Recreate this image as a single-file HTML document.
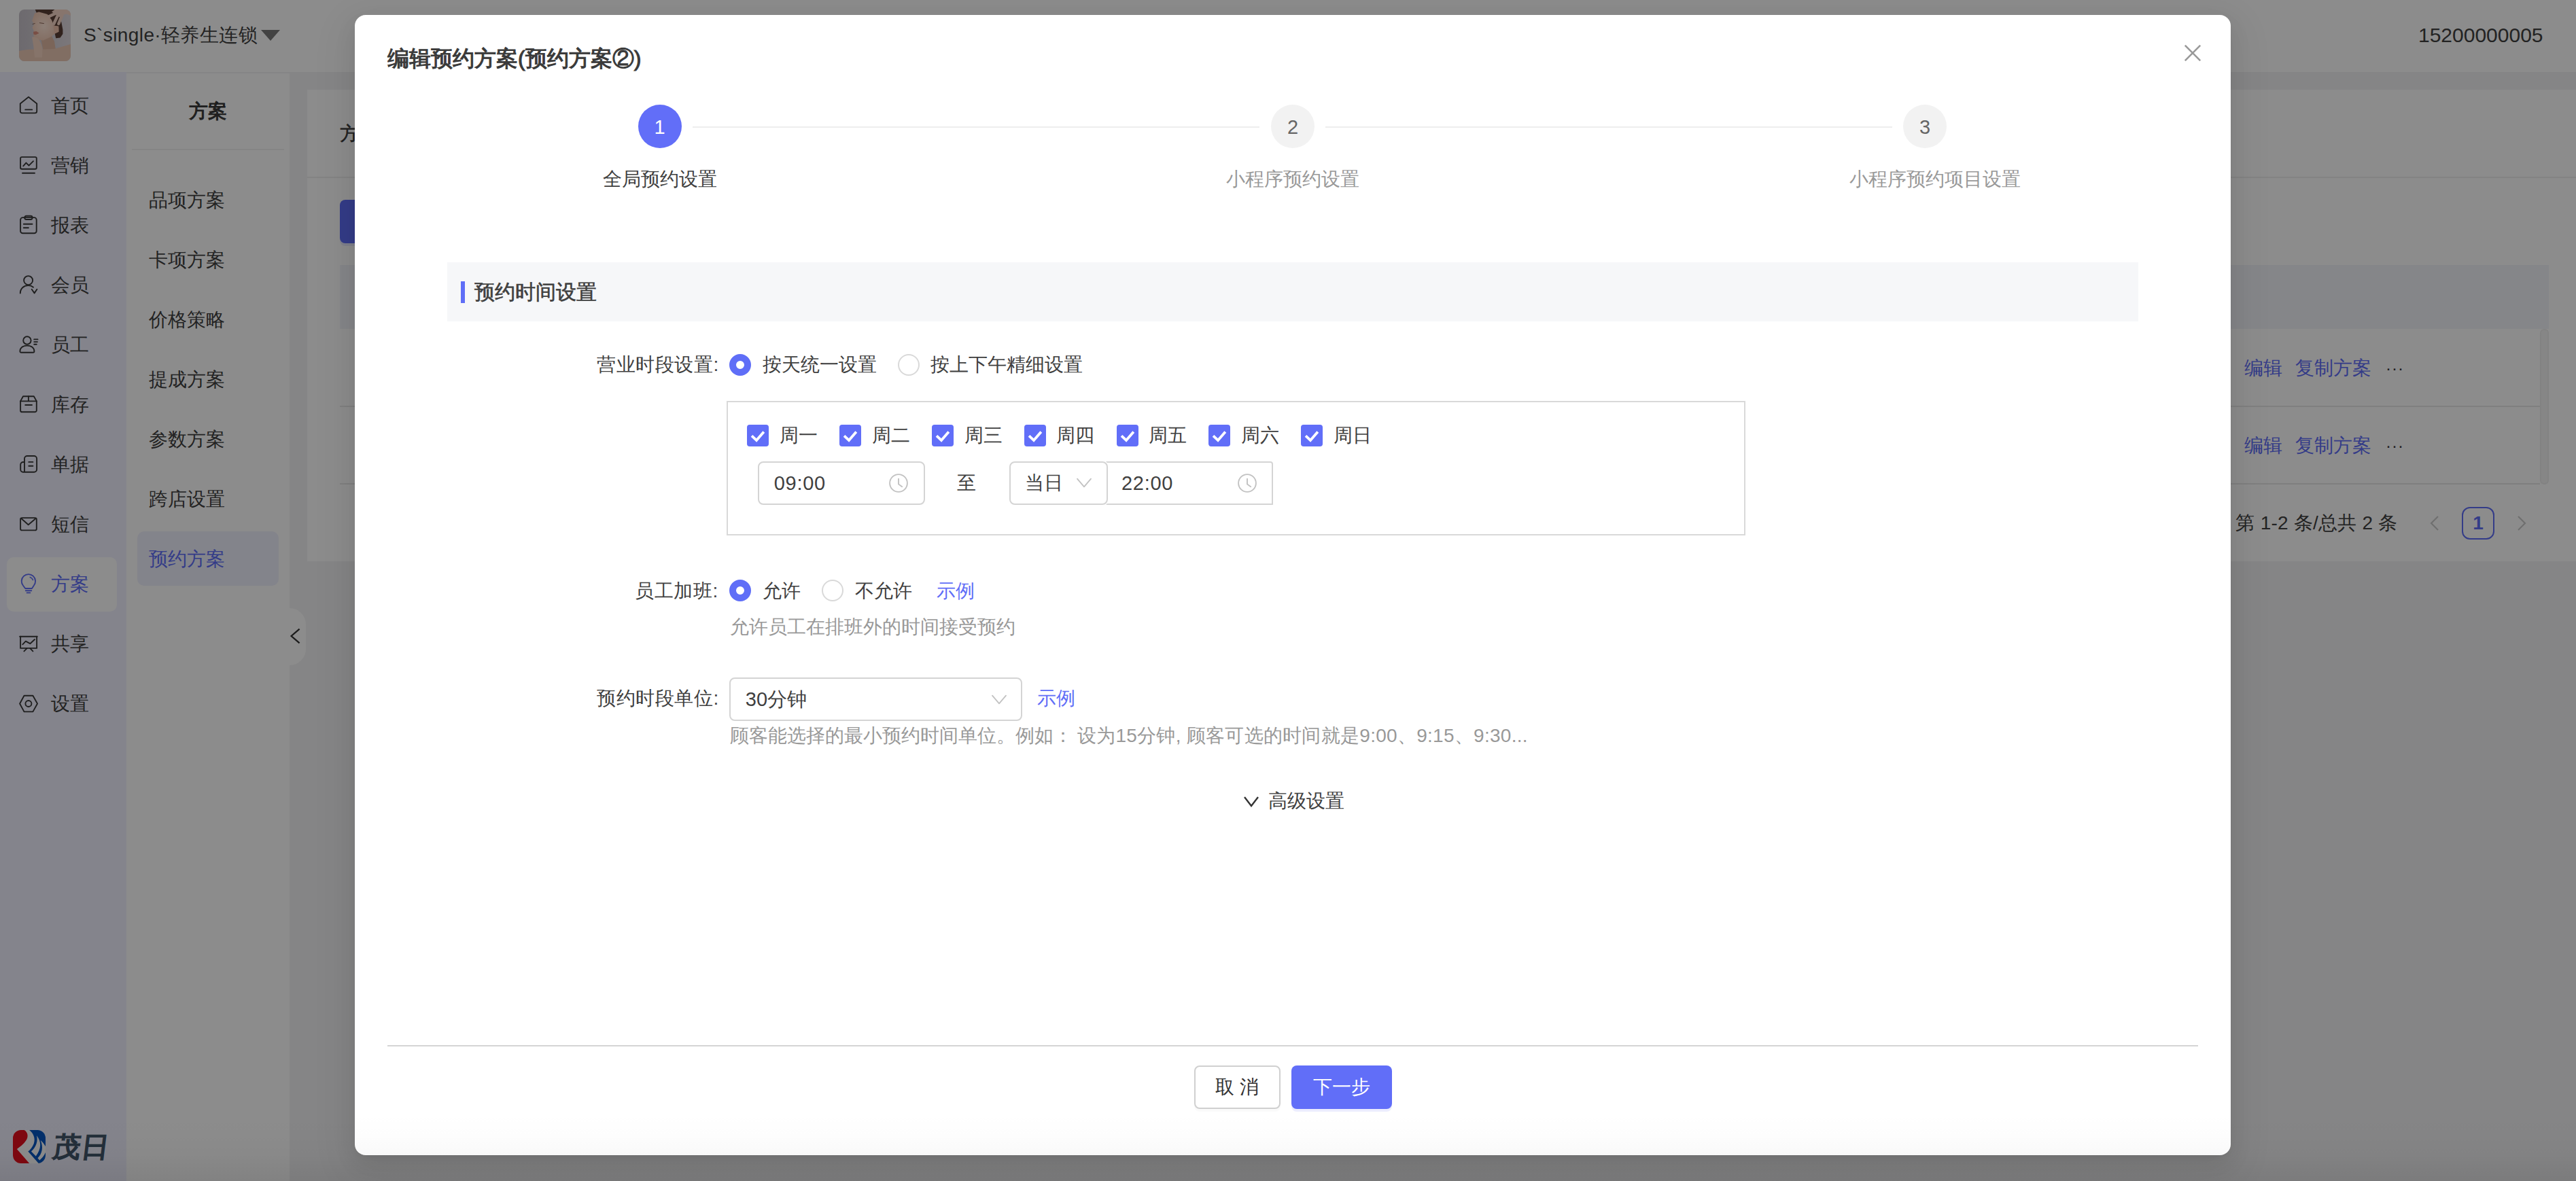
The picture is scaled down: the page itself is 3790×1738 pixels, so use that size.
<!DOCTYPE html>
<html lang="zh">
<head>
<meta charset="utf-8">
<title>预约方案</title>
<style>
*{box-sizing:border-box;margin:0;padding:0}
html,body{width:3790px;height:1738px;overflow:hidden;background:#f3f3f4}
body{font-family:"Liberation Sans",sans-serif;font-size:14px;color:#404040}
#root{position:absolute;left:0;top:0;width:1895px;height:869px;zoom:2;overflow:hidden;background:#f3f3f4}
.abs{position:absolute}
.t{position:absolute;white-space:nowrap;line-height:22px;height:22px}
/* header */
#hdr{position:absolute;left:0;top:0;width:1895px;height:53px;background:#fff}
#avatar{position:absolute;left:14px;top:7px;width:38px;height:38px;border-radius:4px;overflow:hidden}
/* sidebars */
#sb1{position:absolute;left:0;top:53px;width:93px;height:816px;background:#f1f1ff}
#sb2{position:absolute;left:93px;top:54px;width:120px;height:815px;background:#fff}
.mi{position:absolute;left:5px;width:81px;height:40px;border-radius:5px}
.mi svg{position:absolute;left:9px;top:12.5px;width:14px;height:14px;overflow:visible;fill:none;stroke:#3a3a3a;stroke-width:.95;stroke-linecap:round;stroke-linejoin:round}
.mi span{position:absolute;left:32.5px;top:9px;line-height:22px;font-size:14px;color:#404040}
.mi.on{background:#fff}
.mi.on svg{stroke:#5f6ef7}
.mi.on span{color:#5f6ef7}
.si{position:absolute;left:8px;width:104px;height:40px;border-radius:5px;line-height:40px;padding-left:8.5px;font-size:14px;color:#404040}
.si.on{background:#eef0fd;color:#5f6ef7;margin-top:-.6px;line-height:41.2px}
/* content */
#card{position:absolute;left:226px;top:66px;width:1669px;height:347px;background:#fff}
.lnk{color:#5f6ef7}
/* mask */
#mask{position:absolute;left:0;top:0;width:1895px;height:869px;background:rgba(0,0,0,.45)}
/* modal */
#modal{position:absolute;left:261px;top:11px;width:1380px;height:839px;background:#fff;border-radius:8px;box-shadow:0 3px 6px -4px rgba(0,0,0,.12),0 6px 16px 0 rgba(0,0,0,.08),0 9px 28px 8px rgba(0,0,0,.05)}
#modal .t{color:#404040}
.step{position:absolute;width:32px;height:32px;border-radius:50%;text-align:center;line-height:33px;font-size:14.5px}
.radio{position:absolute;width:16px;height:16px;border-radius:50%;border:1px solid #d9d9d9;background:#fff}
.radio.on{border:5px solid #5f6ef7}
.cb{position:absolute;width:16px;height:16px;border-radius:2px;background:#616ef8}
.cb svg{position:absolute;left:0;top:0;width:16px;height:16px;fill:none;stroke:#fff;stroke-width:1.9;stroke-linecap:butt;stroke-linejoin:miter}
.inp{position:absolute;height:32px;border:1px solid #d4d4d4;border-radius:4px;background:#fff}
.inp .v{position:absolute;left:11px;top:4px;line-height:22px;font-size:14px;color:#404040;white-space:nowrap}
.ico{position:absolute;fill:none;stroke:#c2c2c2;stroke-width:.95;stroke-linecap:round;stroke-linejoin:round}
.help{color:#999 !important}
#btm{position:absolute;left:0;top:819px;width:1895px;height:50px;background:linear-gradient(to bottom,rgba(0,0,0,0) 0,rgba(0,0,0,.006) 32%,rgba(0,0,0,.022) 62%,rgba(0,0,0,.075) 100%)}
</style>
</head>
<body>
<div id="root">
<!-- ===== background app ===== -->
<div id="hdr">
  <div id="avatar">
    <svg width="38" height="38" viewBox="0 0 38 38">
<defs><linearGradient id="abg" x1="0" x2="1" y1="0" y2="0"><stop offset="0" stop-color="#c6c1c9"/><stop offset="1" stop-color="#e0dadf"/></linearGradient>
<radialGradient id="afc" cx=".45" cy=".5" r=".6"><stop offset="0" stop-color="#ffe6d8"/><stop offset="1" stop-color="#eec5b0"/></radialGradient></defs>
<rect width="38" height="38" fill="url(#abg)"/>
<path d="M11.9 0.0L25.6 0.0L29.5 2.3L31.1 9.0L32.2 14.8L32.2 18.0L30.3 20.7L27.1 21.1L26.4 18.0L25.6 13.3L23.2 9.0L20.9 5.1L16.2 2.7L12.7 2.3Z" fill="#5a3f35"/>
<path d="M16.2 21.9L17.8 30.5L27.1 30.5L26.0 23.4L24.0 19.5Z" fill="#e0b8a3"/>
<path d="M0 30.500C5 29.500 9 29.300 12 29.500L26 29C30 28 34 26.500 38 25.500V38H0Z" fill="#ecc8b4"/>
<path d="M11.5 2.7L14.6 1.8L20.9 3.5L24.0 7.8L25.6 11.7L29.1 12.5L29.1 16.4L26.0 18.0L23.2 20.3L17.8 22.7L13.5 22.3L11.1 20.3L10.5 18.0L10.9 15.6L9.8 13.3L11.1 10.9L9.6 8.2L10.7 5.1Z" fill="url(#afc)"/>
<path d="M25.2 11.7L29.1 12.3L29.3 16.4L26.0 17.8Z" fill="#f0c4ae"/>
<path d="M26.4 0.0L38.0 0.0L38.0 4.5L35.0 3.3L32.6 3.9L31.1 6.2L27.1 3.9L24.0 1.6Z" fill="#f6d6c6"/>
<path d="M27.1 2.7L21.7 5.3M29.1 3.1L25.6 10.5M31.8 3.9L29.1 10.5" stroke="#f6d6c6" stroke-width="2.200" stroke-linecap="round" fill="none"/>
<path d="M9.6 20.3L11.5 20.1L14.3 21.5L16.2 25.0L17.2 28.5L17.0 35.2L11.5 35.2L10.7 27.3Z" fill="#f5d3c1"/>
<path d="M10.5 16.4L12.7 16.0L14.8 17.4L12.3 18.6L10.7 18.2Z" fill="#dc8f7e"/>
<path d="M15 9.800l3.400.500M9.800 10.800l2-.600" stroke="#8a6556" stroke-width=".5" fill="none"/>
</svg>
  </div>
  <div class="t" style="left:61.5px;top:15px;font-size:14px;letter-spacing:.2px">S`single·轻养生连锁</div>
  <svg class="abs" style="left:192px;top:22px" width="14" height="8" viewBox="0 0 14 8"><path d="M0 0H14L7 8Z" fill="#7a7a7a"/></svg>
  <div class="t" style="left:1779px;top:15px;font-size:15px">15200000005</div>
</div>
<div id="sb1">
<div class="mi" style="top:5px"><svg viewBox="0 0 14 14"><path d="M7 .85l6.100 4.900V11.400a1.300 1.300 0 0 1-1.300 1.300H2.200A1.300 1.300 0 0 1 .9 11.400V5.750z"/><path d="M4.600 10.200h5"/></svg><span>首页</span></div>
<div class="mi" style="top:49px"><svg viewBox="0 0 14 14"><rect x="1.050" y="1.050" width="11.850" height="8.850" rx="1"/><path d="M3.100 7.650l2.100-2.350 2.050 2.050 3.250-3.250"/><path d="M2.500 12.900h9"/></svg><span>营销</span></div>
<div class="mi" style="top:93px"><svg viewBox="0 0 14 14"><rect x="1.050" y="1.550" width="11.800" height="11.600" rx="1.700"/><rect x="4.100" y=".4" width="5.700" height="2.600" rx="1.200"/><path d="M3.400 6.350h6.350M3.400 9.150h3.550"/></svg><span>报表</span></div>
<div class="mi" style="top:137px"><svg viewBox="0 0 14 14"><circle cx="6.800" cy="3.800" r="3.250"/><path d="M.9 13.300c0-3.400 2.600-5.800 5.800-5.800 1.500 0 2.800.5 3.800 1.350"/><path d="M9.350 10.350l1.950 2.850 1.900-2.850"/></svg><span>会员</span></div>
<div class="mi" style="top:181px"><svg viewBox="0 0 14 14"><circle cx="5.950" cy="4" r="2.850"/><path d="M.7 12c0-2.600 2.300-4.200 5.250-4.200S11.200 9.400 11.200 12c0 .5-.4.900-.9.900H1.600c-.5 0-.9-.4-.9-.9z"/><path d="M11.100 3.200h2.650M11.100 5.050h2.400M11.100 6.850h1.800"/></svg><span>员工</span></div>
<div class="mi" style="top:225px"><svg viewBox="0 0 14 14"><path d="M1.050 4.700L3 1.150h7.900l2 3.550v6.750a1.200 1.200 0 0 1-1.200 1.200H2.250a1.200 1.200 0 0 1-1.200-1.200z"/><path d="M1.050 4.700h11.850M6.950 1.150V4.700M4.600 7.500h4.900"/></svg><span>库存</span></div>
<div class="mi" style="top:269px"><svg viewBox="0 0 14 14"><path d="M4 12.850V3a2 2 0 0 1 2-2h5.050a2 2 0 0 1 2 2v7.850a2 2 0 0 1-2 2H2.900a1.800 1.800 0 0 1-1.800-1.800V7.400a1.900 1.900 0 0 1 1.900-1.900h1"/><path d="M7.150 5.450h3.050M7.150 8.400h3.050"/></svg><span>单据</span></div>
<div class="mi" style="top:313px"><svg viewBox="0 0 14 14"><rect x="1.050" y="2.550" width="11.850" height="9.150" rx="1.100"/><path d="M1.900 3.250l4.950 4.400 5.150-4.400"/></svg><span>短信</span></div>
<div class="mi on" style="top:357px"><svg viewBox="0 0 14 14"><path d="M4.600 10.500L3.100 8.500A5.100 5.100 0 1 1 10.800 8.500L9.500 10.500z"/><path d="M4.900 12.150h4.250M5.800 13.700h2.350"/><path d="M8.150 2.200a3.200 3.200 0 0 1 2.050 2.050" stroke-width=".8"/></svg><span>方案</span></div>
<div class="mi" style="top:401px"><svg viewBox="0 0 14 14"><path d="M.55 1.900h12.850"/><path d="M1.050 1.900v8.550h12V1.900"/><path d="M2.650 7.650l2.250-2.350 3.250 1.800 3.350-3.100"/><path d="M3.700 12.700l2.100-2.100M8.150 10.600l2.050 2.100"/></svg><span>共享</span></div>
<div class="mi" style="top:445px"><svg viewBox="0 0 14 14"><path d="M3.750 1.350h6.450l3.300 5.900-3.300 5.950H3.750L.55 7.250z"/><circle cx="6.950" cy="7.250" r="2.250"/></svg><span>设置</span></div>
<svg class="abs" style="left:9.500px;top:778.400px" width="24" height="24.500" viewBox="0 0 49 49" preserveAspectRatio="none">
<defs><clipPath id="lc"><rect width="49" height="49" rx="12"/></clipPath></defs>
<g clip-path="url(#lc)"><rect width="49" height="49" fill="#fff"/>
<path d="M0 0H17C22.500 3 23.500 10 20 15C16 21 10 25 6 28L24.600 49H0Z" fill="#e8101e"/>
<path d="M24.600 0H49V49H38.500L22.800 31.600C26 29 29.500 25 31.400 20C34 12 31 5 24.600 0Z" fill="#0557c4"/>
<path d="M35.600 8C43 17 43 27 34.500 38.500L27.500 31.500C35 25 38 16 35.600 8Z" fill="#fff"/>
<path d="M41.500 15C46 19 49 24 49 24V33C47 38 43 42 40 44.500L37.200 41.300C44 35 46 25 41.500 15Z" fill="#fff"/>
</g></svg>
<div class="t" style="left:37.200px;top:776px;height:30px;line-height:30px;font-size:20.500px;letter-spacing:.3px;-webkit-text-stroke:.9px #43566b;color:#43566b;transform:skewX(-7deg);transform-origin:0 100%">茂日</div>
</div>
<div id="sb2">
<div class="t" style="left:0;width:120px;text-align:center;top:17px;font-size:14px;-webkit-text-stroke:.5px #333">方案</div>
<div class="abs" style="left:4px;top:55.5px;width:112px;height:1px;background:#f0f0f0"></div>
<div class="si" style="top:73.5px">品项方案</div>
<div class="si" style="top:117.5px">卡项方案</div>
<div class="si" style="top:161.5px">价格策略</div>
<div class="si" style="top:205.5px">提成方案</div>
<div class="si" style="top:249.5px">参数方案</div>
<div class="si" style="top:293.5px">跨店设置</div>
<div class="si on" style="top:337.5px">预约方案</div>
</div>
<div class="abs" style="left:213px;top:447.500px;width:12px;height:42px;background:#fff;border-radius:0 12px 12px 0"><svg class="abs" style="left:.2px;top:14px" width="9" height="13" viewBox="0 0 9 13"><path d="M7.300 1.300L1.300 6.500l6 5.200" fill="none" stroke="#333" stroke-width="1.150"/></svg></div>
<div id="card">
<div class="t" style="left:24px;top:21.599999999999994px;-webkit-text-stroke:.25px #333">方案配置</div>
<div class="abs" style="left:0;top:64px;width:1669px;height:1px;background:#eee"></div>
<div class="abs" style="left:24px;top:81px;width:88px;height:32px;background:#5f6ef7;border-radius:4px;box-shadow:0 2px 0 rgba(95,110,247,.15)"></div>
<div class="abs" style="left:24px;top:129px;width:1625px;height:47px;background:#f3f4f9"></div>
<div class="abs" style="left:24px;top:232.5px;width:1618.5px;height:1px;background:#e8e8e8"></div>
<div class="abs" style="left:24px;top:289.5px;width:1618.5px;height:1px;background:#e8e8e8"></div>
<div class="abs" style="left:1642.5px;top:176px;width:6.5px;height:114.5px;background:#f5f5f5;border-radius:3px;border:1px solid #ededed"></div>
<div class="t" style="left:1425px;top:194px;color:#5f6ef7">编辑</div>
<div class="t" style="left:1462.7px;top:194px;color:#5f6ef7">复制方案</div>
<div class="t" style="left:1529px;top:194px;color:#333;letter-spacing:.5px;font-size:12px">···</div>
<div class="t" style="left:1425px;top:251px;color:#5f6ef7">编辑</div>
<div class="t" style="left:1462.7px;top:251px;color:#5f6ef7">复制方案</div>
<div class="t" style="left:1529px;top:251px;color:#333;letter-spacing:.5px;font-size:12px">···</div>
<div class="t" style="left:1418.7px;top:308px;font-size:14px;letter-spacing:.12px">第 1-2 条/总共 2 条</div>
<svg class="abs" style="left:1561px;top:313px" width="8" height="12" viewBox="0 0 8 12"><path d="M6.500 1L1.500 6l5 5" fill="none" stroke="#cbcbcb" stroke-width="1.100"/></svg>
<div class="abs" style="left:1585px;top:307.5px;width:24px;height:24px;margin-top:-.6px;border:1px solid #5f6ef7;border-radius:6px;text-align:center;line-height:22px;color:#5f6ef7;font-weight:bold;font-size:14px">1</div>
<svg class="abs" style="left:1625px;top:313px" width="8" height="12" viewBox="0 0 8 12"><path d="M1.500 1l5 5-5 5" fill="none" stroke="#cbcbcb" stroke-width="1.100"/></svg>
</div>
<div id="mask"></div>
<!-- ===== modal ===== -->
<div id="modal">
<div class="t" style="left:24px;top:21px;font-size:16px;-webkit-text-stroke:.55px #3a3a3a;color:#3a3a3a;height:24px;line-height:24px;margin-top:-1px">编辑预约方案(预约方案②)</div>
<svg class="abs" style="left:1346px;top:22.049999999999997px" width="12" height="12" viewBox="0 0 12 12"><path d="M.4.4l11.200 11.200M11.600.4L.4 11.600" fill="none" stroke="#999" stroke-width="1.300"/></svg>
<div class="step" style="left:208.3px;top:66px;background:#626ef8;color:#fff">1</div>
<div class="step" style="left:674px;top:66px;background:#f2f2f2;color:#666">2</div>
<div class="step" style="left:1139px;top:66px;background:#f2f2f2;color:#666">3</div>
<div class="abs" style="left:248.5px;top:82px;width:417px;height:1px;background:#eee"></div>
<div class="abs" style="left:714px;top:82px;width:417px;height:1px;background:#eee"></div>
<div class="t" style="left:182.3px;top:110px;">全局预约设置</div>
<div class="t" style="left:641px;top:110px;color:#999">小程序预约设置</div>
<div class="t" style="left:1099.7px;top:110px;color:#999">小程序预约项目设置</div>
<div class="abs" style="left:68px;top:182px;width:1244px;height:43.5px;background:#f6f7f9"></div>
<div class="abs" style="left:78px;top:196px;width:3px;height:16px;background:#5f6ef7"></div>
<div class="t" style="left:88px;top:193px;font-size:15px;-webkit-text-stroke:.3px #404040;color:#404040">预约时间设置</div>
<div class="t" style="left:178px;top:246.60000000000002px;width:89.5px;text-align:right;letter-spacing:.3px">营业时段设置:</div>
<div class="radio on" style="left:275.5px;top:249.60000000000002px"></div>
<div class="t" style="left:300px;top:246.60000000000002px;">按天统一设置</div>
<div class="radio" style="left:399.5px;top:249.60000000000002px"></div>
<div class="t" style="left:423.6px;top:246.60000000000002px;">按上下午精细设置</div>
<div class="abs" style="left:273.70000000000005px;top:284px;width:749.5px;height:99px;border:1px solid #d9d9d9"></div>
<div class="cb" style="left:288.7px;top:301.7px"><svg viewBox="0 0 16 16"><path d="M3.500 8.200L7 11.500l5.400-6.300"/></svg></div>
<div class="t" style="left:312.5px;top:298.7px;">周一</div>
<div class="cb" style="left:356.6px;top:301.7px"><svg viewBox="0 0 16 16"><path d="M3.500 8.200L7 11.500l5.400-6.300"/></svg></div>
<div class="t" style="left:380.4px;top:298.7px;">周二</div>
<div class="cb" style="left:424.5px;top:301.7px"><svg viewBox="0 0 16 16"><path d="M3.500 8.200L7 11.500l5.400-6.300"/></svg></div>
<div class="t" style="left:448.3px;top:298.7px;">周三</div>
<div class="cb" style="left:492.4px;top:301.7px"><svg viewBox="0 0 16 16"><path d="M3.500 8.200L7 11.500l5.400-6.300"/></svg></div>
<div class="t" style="left:516.2px;top:298.7px;">周四</div>
<div class="cb" style="left:560.3px;top:301.7px"><svg viewBox="0 0 16 16"><path d="M3.500 8.200L7 11.500l5.400-6.300"/></svg></div>
<div class="t" style="left:584.1px;top:298.7px;">周五</div>
<div class="cb" style="left:628.2px;top:301.7px"><svg viewBox="0 0 16 16"><path d="M3.500 8.200L7 11.500l5.400-6.300"/></svg></div>
<div class="t" style="left:652.0px;top:298.7px;">周六</div>
<div class="cb" style="left:696.1px;top:301.7px"><svg viewBox="0 0 16 16"><path d="M3.500 8.200L7 11.500l5.400-6.300"/></svg></div>
<div class="t" style="left:719.9px;top:298.7px;">周日</div>
<div class="inp" style="left:296.6px;top:328.65px;width:122.800px;height:31.700px"><span class="v" style="font-size:14.500px;letter-spacing:.35px;left:10.800px;top:3.850px">09:00</span><svg class="ico" style="left:95.600px;top:7.650px" width="14" height="14" viewBox="0 0 14 14"><circle cx="7" cy="7" r="6.450"/><path d="M7 3.800v3.900l2.600 1.900"/></svg></div>
<div class="t" style="left:443px;top:333.6px;">至</div>
<div class="inp" style="left:552.6px;top:328.65px;width:122.89999999999998px;height:31.700px;border-radius:0 2px 0 0;border-left-color:transparent"><span class="v" style="font-size:14.500px;letter-spacing:.35px;left:10.399999999999977px;top:3.850px">22:00</span><svg class="ico" style="left:95.89999999999998px;top:7.700px" width="14" height="14" viewBox="0 0 14 14"><circle cx="7" cy="7" r="6.450"/><path d="M7 3.800v3.900l2.600 1.900"/></svg></div>
<div class="inp" style="left:481.6px;top:328.65px;width:72.200px;height:31.700px"><span class="v" style="left:10.400px;top:3.850px">当日</span><svg class="ico" style="left:48.200000000000045px;top:10.850000000000023px" width="11" height="8" viewBox="0 0 11 8"><path d="M.5.8l5 5.900 5-5.900" stroke-width=".9"/></svg></div>
<div class="t" style="left:178px;top:412.8px;width:89.5px;text-align:right;letter-spacing:.3px">员工加班:</div>
<div class="radio on" style="left:275.5px;top:415.3px"></div>
<div class="t" style="left:300px;top:412.8px;">允许</div>
<div class="radio" style="left:343.29999999999995px;top:415.3px"></div>
<div class="t" style="left:368px;top:412.8px;">不允许</div>
<div class="t" style="left:427.79999999999995px;top:412.8px;color:#5f6ef7">示例</div>
<div class="t" style="left:275.79999999999995px;top:439.7px;color:#999">允许员工在排班外的时间接受预约</div>
<div class="t" style="left:178px;top:492px;width:89.5px;text-align:right;letter-spacing:.3px">预约时段单位:</div>
<div class="inp" style="left:275.4px;top:487.6px;width:215.800px"><span class="v" style="font-size:14.500px">30分钟</span><svg class="ico" style="left:192px;top:11.500px" width="11" height="8" viewBox="0 0 11 8"><path d="M.5.8l5 5.900 5-5.900" stroke-width=".9"/></svg></div>
<div class="t" style="left:502px;top:492px;color:#5f6ef7">示例</div>
<div class="t" style="left:275.79999999999995px;top:519.7px;color:#999">顾客能选择的最小预约时间单位。例如： 设为<span style="letter-spacing:.14px">15分钟, 顾客可选的时间就是9:00、9:15、9:30...</span></div>
<svg class="abs" style="left:653.5px;top:574.5px" width="12" height="9" viewBox="0 0 12 9"><path d="M1 1l5 6.500L11 1" fill="none" stroke="#333" stroke-width="1.200"/></svg>
<div class="t" style="left:672px;top:567.6px;">高级设置</div>
<div class="abs" style="left:24px;top:758px;width:1332px;height:1px;background:#d4d4d4"></div>
<div class="abs" style="left:617.4px;top:773px;width:63.4px;height:32px;border:1px solid #d0d0d0;border-radius:4px;background:#fff;box-shadow:0 2px 0 rgba(0,0,0,.02);text-align:center;line-height:30px;color:#333;font-size:14px">取 消</div>
<div class="abs" style="left:689px;top:773px;width:74px;height:32px;border-radius:4px;background:#616ef8;box-shadow:0 2px 0 rgba(95,110,247,.12);text-align:center;line-height:32px;color:#fff;font-size:14px">下一步</div>
</div>
<div id="btm"></div>
</div>
</body>
</html>
